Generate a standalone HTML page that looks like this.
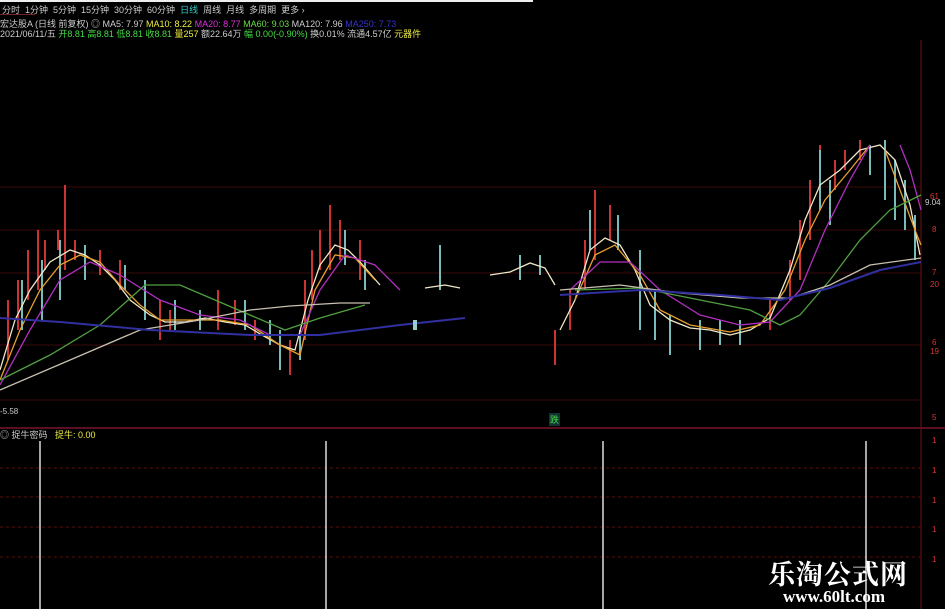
<!DOCTYPE html>
<html><head><meta charset="utf-8"><style>
html,body{margin:0;padding:0;background:#000;width:945px;height:609px;overflow:hidden}
.t{position:absolute;font-family:"Liberation Sans","Noto Sans CJK SC",sans-serif;font-size:9px;white-space:nowrap}
</style></head><body>
<div style="position:relative;width:945px;height:609px;background:#000">
<div style="position:absolute;left:0;top:0;width:533px;height:2px;background:#eee"></div>
<div class="t" style="left:2px;top:3px;color:#ccc">分时&nbsp; 1分钟&nbsp; 5分钟&nbsp; 15分钟&nbsp; 30分钟&nbsp; 60分钟&nbsp; <span style="color:#3cc">日线</span>&nbsp; 周线&nbsp; 月线&nbsp; 多周期&nbsp; 更多 ›</div>
<div style="position:absolute;left:0;top:14px;width:35px;height:1px;background:#722"></div>
<div class="t" style="left:0;top:17px;color:#ccc">宏达股A (日线 前复权) ◎ MA5: 7.97 <span style="color:#ee4">MA10: 8.22</span> <span style="color:#d3d">MA20: 8.77</span> <span style="color:#6d4">MA60: 9.03</span> MA120: 7.96 <span style="color:#33c">MA250: 7.73</span></div>
<div class="t" style="left:0;top:27px;color:#ccc">2021/06/11/五 <span style="color:#4d4">开8.81 高8.81 低8.81 收8.81</span> <span style="color:#ee4">量257</span> 额22.64万 <span style="color:#4d4">幅 0.00(-0.90%)</span> 换0.01% 流通4.57亿 <span style="color:#ee4">元器件</span></div>
<svg width="945" height="609" style="position:absolute;left:0;top:0">
<g stroke="#3a0a0a" stroke-width="1">
<line x1="0" y1="187" x2="921" y2="187"/><line x1="0" y1="230" x2="921" y2="230"/>
<line x1="0" y1="273" x2="921" y2="273"/><line x1="0" y1="345" x2="921" y2="345"/>
<line x1="0" y1="400" x2="921" y2="400"/>
</g>
<line x1="0" y1="428" x2="945" y2="428" stroke="#5a1020" stroke-width="2"/>
<line x1="921" y1="40" x2="921" y2="609" stroke="#6a1414"/>
<g stroke="#5a0c0c" stroke-dasharray="3,3"><line x1="0" y1="468" x2="921" y2="468"/><line x1="0" y1="497" x2="921" y2="497"/><line x1="0" y1="527" x2="921" y2="527"/><line x1="0" y1="557" x2="921" y2="557"/></g>
<!-- candles -->
<g stroke="#c33" stroke-width="2">
<path d="M8 360V300M18 330V280M28 300V250M38 290V230M45 270V240M58 250V230M65 270V185M75 260V240M100 275V250M120 290V260M160 340V300M170 330V310M218 330V290M235 325V300M255 340V320M290 375V340M305 340V280M312 300V250M320 270V230M330 270V205M340 260V220M360 280V240M555 365V330M570 330V290M585 290V240M595 260V190M610 240V205M770 330V300M790 300V260M800 280V220M810 240V180M820 200V145M835 190V160M845 170V150M860 160V140"/>
</g>
<g stroke="#7bb" stroke-width="2">
<path d="M22 330V280M42 320V260M60 300V240M85 280V245M125 290V265M145 320V280M175 330V300M200 330V310M245 330V300M270 345V320M280 370V330M300 360V330M345 265V230M365 290V260M440 290V245M520 280V255M540 275V255M590 250V210M618 250V215M640 330V250M655 340V290M670 355V315M700 350V320M720 345V320M740 345V320M820 210V150M830 225V180M870 175V145M885 200V140M895 220V160M905 230V180M915 260V215"/>
</g>
<g fill="none" stroke-width="1.3">
<polyline stroke="#f0e8c8" points="0,370 15,320 30,290 50,262 70,250 85,255 100,265 115,280 130,300 150,315 165,322 185,322 205,318 225,322 245,325 262,335 280,345 295,350 308,300 320,265 335,245 348,250 360,262 380,285"/>
<polyline stroke="#e5a030" points="0,380 20,330 40,290 60,265 80,255 100,262 120,285 140,305 160,320 190,320 220,320 250,325 280,345 300,355 315,290 335,255 355,258 375,280"/>
<polyline stroke="#b030c0" points="0,385 30,330 60,280 90,262 120,275 160,300 200,315 240,320 270,335 300,335 320,290 345,255 375,265 400,290"/>
<polyline stroke="#50a040" points="0,380 50,355 100,325 145,285 180,285 215,300 250,315 285,330 320,318 365,305"/>
<polyline stroke="#c8c0b0" points="0,390 70,360 140,330 200,320 250,310 290,306 340,303 370,303"/>
<polyline stroke="#3030a0" stroke-width="2" points="0,318 60,322 150,330 250,335 320,335 400,325 465,318"/>
<polyline stroke="#f0e8c8" points="425,288 445,285 460,288"/>
<polyline stroke="#f0e8c8" points="490,275 510,272 530,263 545,268 555,285"/>
<polyline stroke="#f0e8c8" points="560,330 575,300 590,250 605,238 620,245 635,270 650,305 670,320 690,328 710,330 730,335 750,330 770,318 790,270 805,220 820,185 840,170 860,150 880,145 895,160 910,205 920,255"/>
<polyline stroke="#e5a030" points="575,300 595,255 615,245 640,275 660,310 690,325 730,332 760,325 785,290 805,240 825,200 850,170 870,145"/>
<polyline stroke="#e5a030" points="885,150 900,190 915,230 921,245"/>
<polyline stroke="#b030c0" points="570,290 600,262 630,262 660,290 700,315 740,325 770,322 800,290 825,230 850,180 870,145"/>
<polyline stroke="#b030c0" points="900,145 910,170 921,210"/>
<polyline stroke="#50a040" points="575,290 640,288 700,300 750,310 780,325 800,315 830,280 860,240 890,210 921,195"/>
<polyline stroke="#c8c0b0" points="560,290 620,285 680,293 740,298 790,298 830,285 870,265 921,258"/>
<polyline stroke="#3030a0" stroke-width="2" points="560,295 640,290 720,295 780,300 830,288 880,270 921,262"/>
</g>
<rect x="413" y="320" width="4" height="10" fill="#9cc"/>
<g stroke="#ddd" stroke-width="1.5"><line x1="40" y1="441" x2="40" y2="609"/><line x1="326" y1="441" x2="326" y2="609"/><line x1="603" y1="441" x2="603" y2="609"/><line x1="866" y1="441" x2="866" y2="609"/></g>
<g font-family="Liberation Sans,sans-serif" font-size="8" fill="#d33">
<text x="925" y="205" fill="#ccc">9.04</text><text x="930" y="196" fill="#ccc" font-size="0">x</text>
<text x="930" y="199">61</text><text x="932" y="232">8</text><text x="932" y="275">7</text><text x="930" y="287">20</text>
<text x="932" y="345">6</text><text x="930" y="354">19</text><text x="932" y="420">5</text>
<text x="932" y="443">1</text><text x="932" y="473">1</text><text x="932" y="503">1</text><text x="932" y="532">1</text><text x="932" y="562">1</text>
<text x="0" y="414" fill="#ccc">-5.58</text>
</g>
</svg>
<div class="t" style="left:549px;top:413px;color:#4d4;background:#133;padding:0 1px">跌</div>
<div class="t" style="left:0;top:428px;color:#ccc">◎ 捉牛密码&nbsp;&nbsp; <span style="color:#ee4">捉牛: 0.00</span></div>
<div style="position:absolute;left:768px;top:553px;font-family:'Noto Serif CJK SC','WenQuanYi Zen Hei',serif;font-weight:bold;font-size:27px;color:#fff;letter-spacing:1px">乐淘公式网</div>
<div style="position:absolute;left:783px;top:587px;font-family:'Liberation Serif',serif;font-weight:bold;font-size:17px;color:#fff">www.60lt.com</div>
</div>
</body></html>
